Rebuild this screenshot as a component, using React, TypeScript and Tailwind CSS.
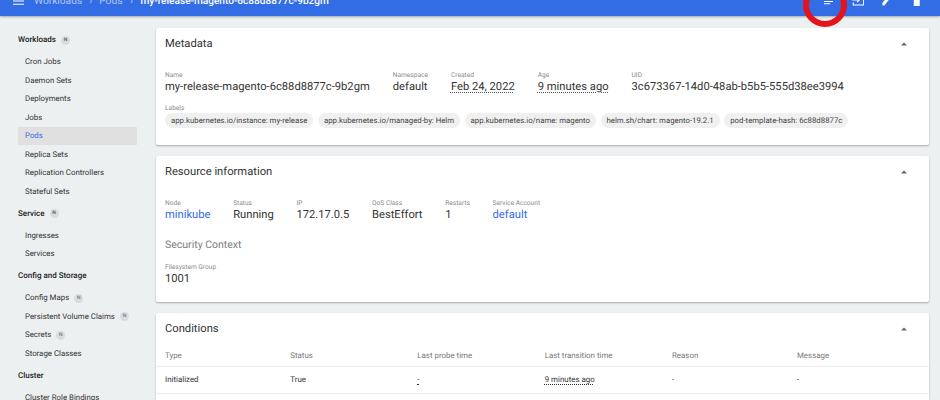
import React from "react";

const N = () => (
  <span className="ml-[5px] inline-flex h-[9px] w-[9px] items-center justify-center rounded-full bg-[#d8dcde] text-[5px] leading-none text-[#555]">N</span>
);

const Head = ({ children, n, first }: { children: React.ReactNode; n?: boolean; first?: boolean }) => (
  <div className={`mb-[3.5px] flex h-[18.5px] items-center pl-[18px] text-[8px] font-medium text-[#222] ${first ? "" : "mt-[3.5px]"}`}>
    {children}
    {n && <N />}
  </div>
);

const Item = ({ children, n, active }: { children: React.ReactNode; n?: boolean; active?: boolean }) => (
  <div className={`ml-[18px] mr-[19px] flex h-[18.5px] items-center pl-[7px] text-[7.85px] ${active ? "bg-[#e0e0e0] text-[#326de6]" : "text-[#333]"}`}>
    {children}
    {n && <N />}
  </div>
);

const Chevron = () => (
  <svg width="6" height="4" viewBox="0 0 6 4" className="block"><path d="M3 0.5 L6 3.5 H0 Z" fill="#666" /></svg>
);

const Card = ({ title, className, children }: { title: string; className: string; children: React.ReactNode }) => (
  <section className={`rounded-[2px] bg-white shadow-[0_1px_2px_rgba(0,0,0,0.3)] ${className}`}>
    <div className="flex h-[30px] items-center justify-between pl-[9px] pr-[22px] pt-[1px]">
      <h2 className="pt-[1px] text-[11.2px] font-normal text-[#333]">{title}</h2>
      <Chevron />
    </div>
    {children}
  </section>
);

const Field = ({ label, value, kind, className = "" }: { label: string; value: string; kind?: "link" | "dotted"; className?: string }) => (
  <div className={className}>
    <div className="text-[6.6px] leading-[9px] text-[#8a8a8a]">{label}</div>
    <div
      className={`mt-[0.5px] whitespace-nowrap text-[11.2px] leading-[14px] ${
        kind === "link" ? "text-[#326de6]" : kind === "dotted" ? "text-[#333] underline decoration-dotted decoration-[#555] underline-offset-2" : "text-[#333]"
      }`}
    >
      {value}
    </div>
  </div>
);

const labels = [
  "app.kubernetes.io/instance: my-release",
  "app.kubernetes.io/managed-by: Helm",
  "app.kubernetes.io/name: magento",
  "helm.sh/chart: magento-19.2.1",
  "pod-template-hash: 6c88d8877c",
];

const cols = "grid grid-cols-[125.3px_127px_127.4px_127.3px_125px_1fr] pl-[9px]";

export default function App() {
  return (
    <div className="relative h-[400px] w-[940px] overflow-hidden bg-[#edf0f1] font-['Roboto',sans-serif] [text-rendering:geometricPrecision]">
      <header className="flex h-[16px] items-end overflow-hidden bg-[#326de6] shadow-[0_1px_2px_rgba(0,0,0,0.3)]">
        <div className="flex h-[32px] w-full shrink-0 items-center pl-[13px] text-[10.2px] text-white">
          <div className="flex items-center pt-[3px]">
            <svg width="11" height="8" viewBox="0 0 11 8" className="mr-[10px] block"><path d="M0 0h11v1H0zM0 3.4h11v1H0zM0 6.8h11v1H0z" fill="#fff" /></svg>
            <span className="opacity-60">Workloads</span>
            <span className="mx-[7px] opacity-60">›</span>
            <span className="opacity-60">Pods</span>
            <span className="mx-[7.5px] opacity-60">›</span>
            <span className="text-[10.1px] font-medium">my-release-magento-6c88d8877c-9b2gm</span>
          </div>
          <div className="ml-auto mr-[20px] flex items-center">
            <svg width="9.5" height="9" viewBox="0 0 10 9" className="mr-[18.5px]"><path d="M0 0h10v1H0zM0 2.5h10v1H0zM0 5h10v1H0zM0 7.5h6.5v1H0z" fill="#fff" /></svg>
            <svg width="12.5" height="12" viewBox="0 0 12 12" fill="none" stroke="#fff" strokeWidth="1.1" className="mr-[17.5px]"><path d="M1 4V1h10.4v10H1V8.5" /><path d="M0 6h7M4.8 3.8L7 6 4.8 8.2" /></svg>
            <svg width="9.5" height="12" viewBox="0 0 12 12" className="mr-[21.5px]" preserveAspectRatio="none"><path d="M0.5 11.5V9L8 1.5l2.5 2.5L3 11.5z" fill="#fff" /></svg>
            <svg width="7.5" height="11" viewBox="0 0 10 12" preserveAspectRatio="none"><path d="M1 3h8v9H1zM0 1h3l1-1h2l1 1h3v1H0z" fill="#fff" /></svg>
          </div>
        </div>
      </header>

      <div className="pointer-events-none absolute left-[803px] top-[-17.5px] h-[44px] w-[44px] rounded-full border-[6px] border-[#e3141c]" />

      <div className="flex">
        <nav className="w-[156px] shrink-0 pt-[14.75px]">
          <Head n first>Workloads</Head>
          <Item>Cron Jobs</Item>
          <Item>Daemon Sets</Item>
          <Item>Deployments</Item>
          <Item>Jobs</Item>
          <Item active>Pods</Item>
          <Item>Replica Sets</Item>
          <Item>Replication Controllers</Item>
          <Item>Stateful Sets</Item>
          <Head n>Service</Head>
          <Item>Ingresses</Item>
          <Item>Services</Item>
          <Head>Config and Storage</Head>
          <Item n>Config Maps</Item>
          <Item n>Persistent Volume Claims</Item>
          <Item n>Secrets</Item>
          <Item>Storage Classes</Item>
          <Head>Cluster</Head>
          <Item>Cluster Role Bindings</Item>
        </nav>

        <main className="flex w-[773px] shrink-0 flex-col gap-[11px] pt-[12px]">
          <Card title="Metadata" className="h-[117px]">
            <div className="flex gap-[23px] pl-[9px] pt-[12.5px]">
              <Field label="Name" value="my-release-magento-6c88d8877c-9b2gm" />
              <Field label="Namespace" value="default" />
              <Field label="Created" value="Feb 24, 2022" kind="dotted" />
              <Field label="Age" value="9 minutes ago" kind="dotted" />
              <Field label="UID" value="3c673367-14d0-48ab-b5b5-555d38ee3994" />
            </div>
            <div className="pl-[9px] pt-[9.5px]">
              <div className="text-[6.6px] leading-[9px] text-[#8a8a8a]">Labels</div>
              <div className="mt-[0.5px] flex gap-[4.5px]">
                {labels.map((l) => (
                  <span key={l} className="flex h-[15px] items-center whitespace-nowrap rounded-full bg-[#f0f0f0] px-[6px] text-[7.8px] text-[#444]">{l}</span>
                ))}
              </div>
            </div>
          </Card>

          <Card title="Resource information" className="h-[146px]">
            <div className="flex gap-[22.7px] pl-[9px] pt-[12.8px]">
              <Field label="Node" value="minikube" kind="link" />
              <Field label="Status" value="Running" />
              <Field label="IP" value="172.17.0.5" />
              <Field label="QoS Class" value="BestEffort" />
              <Field label="Restarts" value="1" />
              <Field label="Service Account" value="default" kind="link" />
            </div>
            <div className="pl-[9px] pt-[16px] text-[10.5px] leading-[13px] text-[#7d7d7d]">Security Context</div>
            <Field label="Filesystem Group" value="1001" className="pl-[9px] pt-[11.5px]" />
          </Card>

          <Card title="Conditions" className="h-[200px]">
            <div className={`${cols} h-[24px] items-center border-b border-[#eee] pt-[2px] text-[7.9px] text-[#777]`}>
              <span>Type</span><span>Status</span><span>Last probe time</span><span>Last transition time</span><span>Reason</span><span>Message</span>
            </div>
            <div className={`${cols} h-[27px] items-center border-b border-[#eee] text-[7.9px] text-[#333]`}>
              <span>Initialized</span>
              <span>True</span>
              <span className="underline decoration-dotted underline-offset-2">-</span>
              <span className="underline decoration-dotted underline-offset-2">9 minutes ago</span>
              <span>-</span>
              <span>-</span>
            </div>
          </Card>
        </main>
      </div>
    </div>
  );
}
